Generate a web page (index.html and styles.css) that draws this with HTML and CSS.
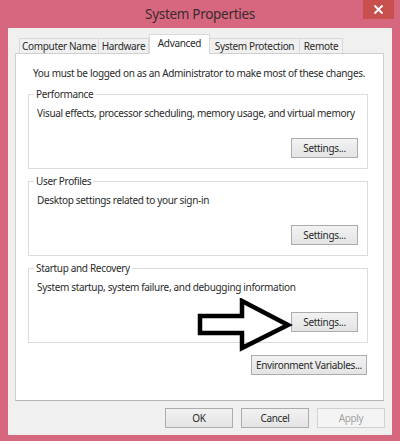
FILE: index.html
```html
<!DOCTYPE html>
<html>
<head>
	<meta charset="UTF-8">
	<title>System Properties</title>
	<link rel="stylesheet" href="styles.css">
</head>
<body>
	<div class="window">
		<div class="titlebar">
			<span class="title">System Properties</span>
			<span class="close">
				<svg width="11" height="11" viewBox="0 0 11 11"><path d="M1.5 1.5 L9.5 9.5 M9.5 1.5 L1.5 9.5" stroke="#fff" stroke-width="1.8"/></svg>
			</span>
		</div>

		<div class="client">
			<div class="tabs">
				<div class="tab tab-cn">Computer Name</div>
				<div class="tab tab-hw">Hardware</div>
				<div class="tab tab-adv selected">Advanced</div>
				<div class="tab tab-sp">System Protection</div>
				<div class="tab tab-rm">Remote</div>
			</div>

			<div class="panel">
				<p class="note">You must be logged on as an Administrator to make most of these changes.</p>

				<fieldset class="group">
					<legend>Performance</legend>
					<p class="desc">Visual effects, processor scheduling, memory usage, and virtual memory</p>
					<div class="group-actions"><button class="btn">Settings...</button></div>
				</fieldset>

				<fieldset class="group">
					<legend>User Profiles</legend>
					<p class="desc">Desktop settings related to your sign-in</p>
					<div class="group-actions"><button class="btn">Settings...</button></div>
				</fieldset>

				<fieldset class="group startup">
					<legend>Startup and Recovery</legend>
					<p class="desc">System startup, system failure, and debugging information</p>
					<div class="group-actions"><button class="btn">Settings...</button></div>
					<svg class="arrow" width="96" height="54" viewBox="0 0 96 54">
						<path d="M3 18 L45 18 L45 3 L91 27 L45 50 L45 35 L3 35 Z" fill="none" stroke="#000" stroke-width="4.5" stroke-linejoin="miter"/>
					</svg>
				</fieldset>

				<div class="panel-actions"><button class="btn btn-env">Environment Variables...</button></div>
			</div>

			<div class="dialog-actions">
				<button class="btn">OK</button>
				<button class="btn">Cancel</button>
				<button class="btn" disabled>Apply</button>
			</div>
		</div>
	</div>
</body>
</html>
```

FILE: styles.css
```css
body { margin: 0; background: #fff; font-family: "Noto Sans", "DejaVu Sans", sans-serif; font-size: 10px; letter-spacing: -0.33px; color: #2a2a2a; white-space: nowrap; }

.window { width: 400px; height: 441px; background: #d6677f; display: flex; flex-direction: column; }

.titlebar { height: 28px; display: grid; grid-template-columns: 1fr auto 1fr; align-items: start; }
.title { grid-column: 2; font-size: 13.5px; letter-spacing: -0.3px; line-height: 28px; color: #3b2a2e; }
.close { grid-column: 3; justify-self: end; margin-right: 6px; width: 31px; height: 19px; background: #c7504f; display: flex; align-items: center; justify-content: center; }

.client { margin: 0 8px; height: 407px; background: #f0f0f0; display: flex; flex-direction: column; }

.tabs { display: flex; align-items: flex-end; height: 20px; margin: 6px 0 -1px 11px; }
.tab { box-sizing: border-box; height: 16px; line-height: 15px; border: 1px solid #d9d9d9; border-bottom: none; background: #f0f0f0; text-align: center; margin-right: -1px; color: #2a2a2a; }
.tab.selected { position: relative; z-index: 1; height: 20px; line-height: 17px; background: #fff; }
.tab-cn { width: 80px; }
.tab-hw { width: 51px; }
.tab-adv { width: 61px; margin-left: 1px; }
.tab-sp { width: 91px; }
.tab-rm { width: 44px; }

.panel { box-sizing: border-box; margin-left: 7px; width: 369px; height: 348px; background: #fff; border: 1px solid #cfcfcf; border-bottom-color: #b4b4b4; padding: 0 15px 0 12px; }

.note { margin: 12px 0 7px 5px; line-height: 14px; }

.group { margin: 0; padding: 0 9px 10px 8px; border: 1px solid #dcdcdc; height: 82px; box-sizing: border-box; }
.group + .group { margin-top: 5px; }
.group legend { padding: 0 2px; margin-left: -3px; line-height: 14px; }
.desc { margin: 5px 0 0 0; line-height: 14px; }
.group-actions { display: flex; justify-content: flex-end; margin-top: 18px; }

.startup { position: relative; }
.arrow { position: absolute; left: 168px; top: 23px; }

.panel-actions { display: flex; justify-content: flex-end; margin-top: 12px; padding-right: 1px; }

.btn { font: inherit; letter-spacing: inherit; color: #2a2a2a; width: 67px; height: 20px; padding: 0; border: 1px solid #acacac; background: linear-gradient(#f2f2f2, #e4e4e4); }
.btn-env { width: 116px; }
.btn:disabled { color: #a3a3a3; border-color: #d2d2d2; background: #f4f4f4; }

.dialog-actions { display: flex; justify-content: flex-end; gap: 8px; margin-top: 7px; padding-right: 7px; }
.dialog-actions .btn { width: 68px; }
```
